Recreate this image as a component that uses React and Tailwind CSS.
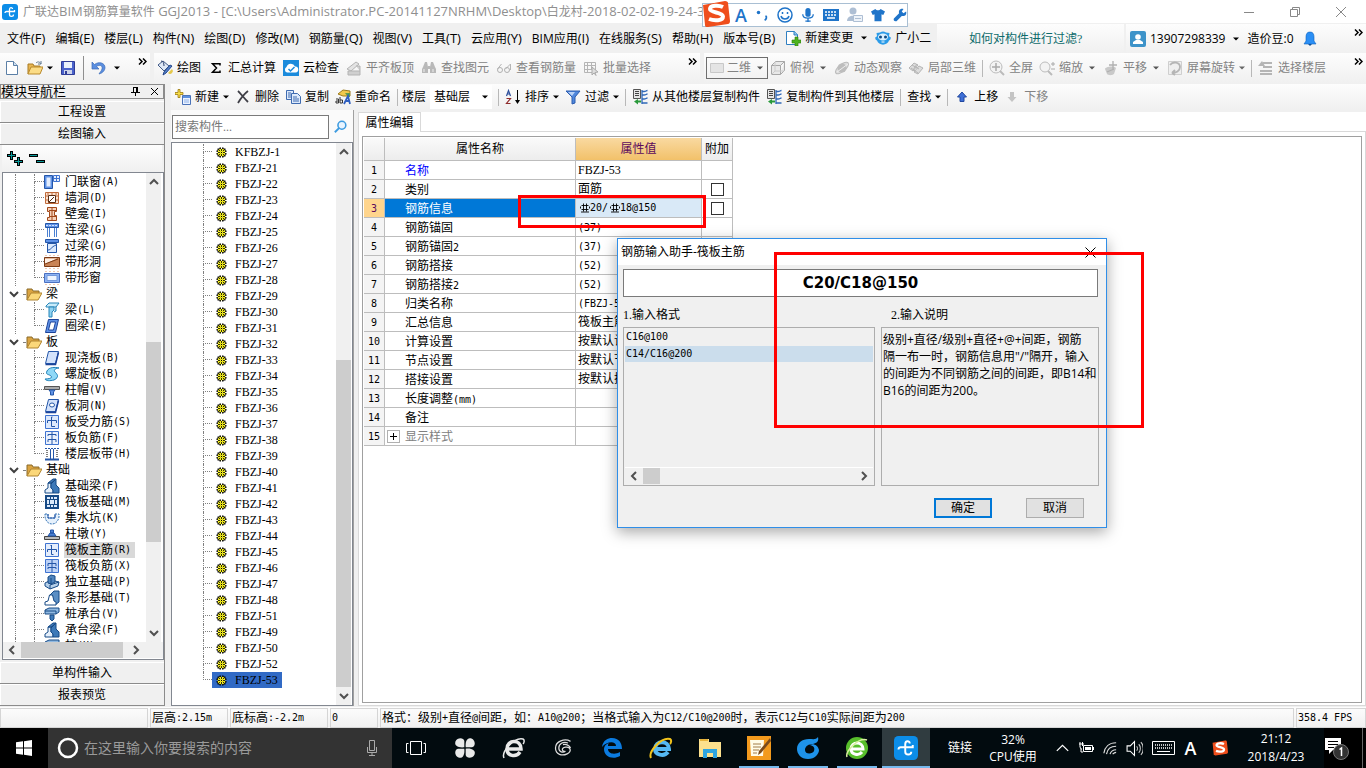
import React, { useState } from "react";
import clsx from "clsx";

const SONG = "font-['Liberation_Serif','Noto_Sans_CJK_SC',serif]";
const MONO = "font-['DejaVu_Sans_Mono','Noto_Sans_CJK_SC',monospace]";
const UI = "font-['Open_Sans','Noto_Sans_CJK_SC',sans-serif]";

// Chinese runs are 12px, latin runs sit in a 6px wide monospace
const Song = ({ children }) => (
  <>
    {children.split(/([\x20-\x7e]+)/).filter(Boolean).map((part, i) => (
      <span key={i} className={/^[\x20-\x7e]/.test(part) ? `${MONO} text-[10px]` : "text-xs"}>
        {part}
      </span>
    ))}
  </>
);

const Svg = ({ size = 16, box = 16, children, className }) => (
  <svg width={size} height={size} viewBox={`0 0 ${box} ${box}`} fill="none" className={clsx("shrink-0", className)} aria-hidden="true">
    {children}
  </svg>
);

const Caret = ({ className = "fill-black" }) => (
  <svg width="6" height="4" viewBox="0 0 6 4" className={clsx("shrink-0", className)} aria-hidden="true">
    <path d="M0 0.5h6L3 3.5z" />
  </svg>
);

const Chevron = ({ turn = "", className = "stroke-[#505050]" }) => (
  <svg width="10" height="10" viewBox="0 0 10 10" fill="none" strokeWidth="2" className={clsx("shrink-0", turn, className)} aria-hidden="true">
    <path d="M1 3l4 4 4-4" />
  </svg>
);

const Sep = () => <span className="h-[17px] w-px shrink-0 bg-[#b8b8b8]" />;

const More = () => (
  <button aria-label="更多" className="mt-1 h-2 w-3 self-start">
    <svg width="9" height="7" viewBox="0 0 9 7" fill="none" stroke="#000" strokeWidth="1.5">
      <path d="M1 .5l3 3-3 3M5 .5l3 3-3 3" />
    </svg>
  </button>
);

/* ---------- toolbar icons ---------- */
const icons = {
  file: <Svg><path d="M2.500 1.500h7l4 4v9h-11z" fill="#fff" stroke="#5b7fa6" /><path d="M9.500 1.500v4h4" fill="#cfe0f2" stroke="#5b7fa6" /></Svg>,
  open: <Svg><path d="M1 14V4h5l1 2h6v3" fill="#e8b652" stroke="#a87a23" /><path d="M1 14l3-7h12l-3 7z" fill="#fbdc86" stroke="#b98a2d" /><path d="M9 3c2-2 4-1 5 1m0-3v3h-3" stroke="#5f7890" /></Svg>,
  save: <Svg><path d="M1.500 1.500h13v13h-13z" fill="#4a62cc" stroke="#2f3c96" /><path d="M4 2h8v6H4z" fill="#e9f0fb" /><path d="M4 10h8v4H4z" fill="#cdd4ea" /><path d="M5 11h2v3H5z" fill="#2f3c96" /></Svg>,
  undo: <Svg><path d="M1 2v7h7L5.500 6.500C9 4 12 6 11 9c-.5 2-2 3-3 5 4-1 6-4 6-6.500C14 3 8 1 3.500 4.500z" fill="#5b8fe0" stroke="#3c6bb8" strokeWidth=".7" /></Svg>,
  paint: <Svg><path d="M1 5l5-4 6 5-5 5z" fill="#dfe8f5" stroke="#415a86" /><path d="M4 1c2 0 3 2 3 5" stroke="#2a3f6d" /><path d="M15 6l-6 7-3 2 1-3 6-7z" fill="#5280c9" stroke="#27488b" /><path d="M11 13c2 2 4 1 5-2l-1-2-4 4z" fill="#e5c84b" /></Svg>,
  sigma: <Svg><path d="M12 5.500V3.700H4.500L8.500 8l-4 4.300H12v-1.800" stroke="#000" strokeWidth="1.500" /></Svg>,
  cloud: <Svg><path d="M0 0h16v16H0z" fill="#1b8bdc" /><path d="M4 12.500a3 3 0 01-.5-5.500A4.500 4.500 0 0112 6.500a3 3 0 01.500 6z" fill="#fff" /><path d="M5.500 9l2 2 4-4" stroke="#1b8bdc" strokeWidth="1.500" /></Svg>,
  slab: <Svg><path d="M1 9l9-7 3 2-8 7z" fill="#e3e3e3" stroke="#b3b3b3" /><path d="M2 11h12v4H2zM10 6h4v5" fill="#cfcfcf" stroke="#b3b3b3" /></Svg>,
  binocular: <Svg><path d="M2 7l2-5h2l1 5v6H1V9zM14 7l-2-5h-2L9 7v6h6V9zM7 6h2v3H7z" fill="#b9b9b9" /><path d="M3 9v3m9-3v3" stroke="#eee" /></Svg>,
  glasses: <Svg><path d="M1.500 9l4-5m4 5l5-5v6" stroke="#b5b5b5" /><circle cx="4" cy="10" r="2.500" stroke="#b0b0b0" /><circle cx="11" cy="10" r="2.500" stroke="#b0b0b0" /></Svg>,
  batch: <Svg><path d="M1.500 2.500h11v10h-11zM1 5.500h12M1 9.500h8M4.500 2v11M8.500 2v8" stroke="#b5b5b5" /><path d="M9 7l6 5-3 .5 1 3-2-2.500-2 2z" fill="#ddd" stroke="#aaa" /></Svg>,
  flat: <Svg><path d="M1.500 3.500h13v9h-13z" fill="#e4e4e4" stroke="#c8c8c8" /></Svg>,
  cube: <Svg><path d="M1.500 5.500h9v9h-9zM1.500 5.500l4-4h9l-4 4M14.500 1.500v9l-4 4" fill="#e9e9e9" stroke="#a8a8a8" /><path d="M5 2v9l-4 4m4-4h9" stroke="#ccc" /></Svg>,
  orbit: <Svg><ellipse cx="8" cy="8" rx="8" ry="3.500" transform="rotate(-40 8 8)" fill="#ddd" stroke="#bbb" /><circle cx="8" cy="8" r="4.500" fill="#bdbdbd" /><path d="M3 12L14 4" stroke="#eee" /></Svg>,
  local: <Svg><path d="M1 8l5-5 4 2-5 6zM6 12l5-6 4 2-5 6z" fill="#ddd" stroke="#b5b5b5" /><path d="M4 5l7 4M3 8l7 5M9 4L5 10" stroke="#b5b5b5" /></Svg>,
  full: <Svg><circle cx="7" cy="7" r="6" fill="#f3f3f3" stroke="#bdbdbd" /><path d="M7 3v8M3 7h8" stroke="#aaa" strokeWidth="1.500" /><path d="M11 11l4 4" stroke="#bbb" strokeWidth="2" /></Svg>,
  zoom: <Svg><circle cx="6" cy="7" r="5" fill="#f3f3f3" stroke="#bdbdbd" /><path d="M9 11l4 4" stroke="#bbb" strokeWidth="2" /><path d="M12 4h4m-2-2v4m-2 3h4" stroke="#aaa" /></Svg>,
  pan: <Svg><path d="M2 9c0-2 8-4 11-1l-2 6c-3 2-6 1-7 0z" fill="#c9c9c9" /><path d="M10 1v8M6 5h8M4 12l7-3" stroke="#b0b0b0" strokeWidth="1.300" /></Svg>,
  rotate: <Svg><path d="M1.500 1.500h13v13h-13z" fill="#efefef" stroke="#cfcfcf" /><path d="M3 5c3-4 10-3 10 2 0 4-4 6-8 6m0 0l3-3m-3 3l3 2" stroke="#b5b5b5" strokeWidth="1.800" /></Svg>,
  floors: <Svg><path d="M5 3h9M5 7h9M2 11h12M2 14h12" stroke="#b5b5b5" strokeWidth="2" /><path d="M0 6l4-5 3 5z" fill="#b5b5b5" /></Svg>,
  add: <Svg><path d="M7.500 6.500h8v9h-8z" fill="#eaf2ff" stroke="#4a72b8" /><path d="M8 7h7v2H8z" fill="#5b8fe0" /><path d="M9 11h5m-5 2h5" stroke="#8fb1e8" /><path d="M3 .5h2v3h3v2H5v3H3v-3H0v-2h3z" fill="#f9e04a" stroke="#9c7a10" strokeWidth=".8" /></Svg>,
  del: <Svg><path d="M3 2c3 3 6 7 10 11M13 2C9 5 6 9 3 14" stroke="#3f3f46" strokeWidth="1.800" /></Svg>,
  copy: <Svg><path d="M1.500 1.500h7v9h-7z" fill="#dce9fb" stroke="#3f6bb0" /><path d="M3 4h3M3 6h3M3 8h3" stroke="#3f6bb0" /><path d="M6.500 4.500h6l3 3v7h-9z" fill="#dce9fb" stroke="#3f6bb0" /><path d="M8 8h4m-4 2h6m-6 2h6" stroke="#3f6bb0" /></Svg>,
  rename: <Svg><path d="M3 5l5-4 7 1v5H8z" fill="#f1c94d" stroke="#9d7a1d" /><path d="M10 4h5v4h-2z" fill="#5d9b4c" /><path d="M1 10h2.500v4H1v-2h2m2-4v6h2.500v-3H5" stroke="#333" /><path d="M9 15l4-8 2 8m-4-3h4" stroke="#2f5fc0" strokeWidth="1.800" /></Svg>,
  sort: <Svg><path d="M1.500 7l2-5.500 2 5.500M2.500 5h2" stroke="#2d4f9c" strokeWidth="1.200" /><path d="M1.500 9.500h4l-4 5h4" stroke="#8e2b2b" strokeWidth="1.200" /><path d="M12.500 1v12" stroke="#000" /><path d="M10 11h5l-2.500 4z" fill="#000" /></Svg>,
  filter: <Svg><path d="M1 2h14L10 8v6l-3 1V8z" fill="#4f87dc" stroke="#2d5cae" /><path d="M3 3h7L7 7z" fill="#b8d2f7" /></Svg>,
  from: <Svg><path d="M1.500.5h7v9h-7z" fill="#e6e6e6" stroke="#555" /><path d="M3 2.500h4M3 4.500h4M3 6.500h4" stroke="#444" /><path d="M10 1v14M10 2.500h2c2 0 2-1 3.500-1M10 6h2c2 0 2-1 3.500-1M10 10h2c2 0 2-1 3.500-1M10 14h5.500" stroke="#2f68b8" strokeWidth="1.300" /><path d="M6 10v5.500L2 12.500z" fill="#2a9a3b" /><path d="M6 12.500h3" stroke="#2a9a3b" strokeWidth="2" /></Svg>,
  up: <Svg><path d="M8 3l4.500 5H10v4.500H6V8H3.500z" fill="#3e6fd6" stroke="#2148a0" /></Svg>,
  down: <Svg><path d="M8 13L3.500 8H6V3h4v5h2.500z" fill="#c4c4c4" /></Svg>,
  change: <Svg><path d="M1.500 1.500h8l3 3v10h-11z" fill="#fff" stroke="#2f7fc1" /><path d="M9 1v4h4" fill="#8cc4ee" stroke="#2f7fc1" /><path d="M10 7h3v3h3v3h-3v3h-3v-3H7v-3h3z" fill="#4cb31e" stroke="#2d7b0c" strokeWidth=".6" /></Svg>,
  robot: <Svg><path d="M0 7c1 1 1 0 2-1l-.5-3L5 2.500C7 1 9 1 11 2.500l3.500.5L14 6c1 1 1 2 2 1-.5 3-1 3-2 3.500C12.500 16 3.500 16 2 10.500 1 10 .5 10 0 7z" fill="#2b9be8" /><ellipse cx="8" cy="7" rx="5" ry="3.500" fill="#d9f0ff" /><circle cx="5.500" cy="7" r="1.500" fill="#124a80" /><circle cx="10.500" cy="7" r="1.500" fill="#124a80" /><path d="M6.500 12h3" stroke="#fff" /></Svg>,
  user: <Svg><rect width="16" height="16" rx="2" fill="#3d93c9" /><circle cx="8" cy="6" r="2.800" fill="#fff" /><path d="M3 13v-2l3-2h4l3 2v2z" fill="#fff" /></Svg>,
  bell: <Svg><path d="M8 1c3 0 4 2 4 5v4l2 3H2l2-3V6c0-3 1-5 4-5z" fill="#2b8ff5" stroke="#0f63bd" strokeWidth=".6" /><path d="M6 13h4l-2 2z" fill="#0f4f96" /></Svg>,
};

const Tool = ({ icon, label, caret, off }) => (
  <button className={clsx("flex shrink-0 items-center gap-1 whitespace-nowrap", off ? "text-[#838383]" : "text-black")}>
    {icons[icon]}
    {label && <span>{label}</span>}
    {caret && <Caret className={off ? "fill-[#666]" : "fill-black"} />}
  </button>
);

const AppLogo = ({ size = 16 }) => (
  <Svg size={size}>
    <rect width="16" height="16" rx="3" fill="#0c8de8" />
    <path d="M10.500 5c0-2-3-2-3 .5v5c0 2.500 4 2.500 4 0M3 9c0-1 .5-1.500 1.500-1.500h8V6" stroke="#fff" strokeWidth="1.300" />
  </Svg>
);

const SogouLogo = ({ size, className }) => (
  <Svg size={size} box={28} className={className}>
    <path d="M1 5l22-4c2 0 3 1 3 2l2 18c0 2-1 3-2 3L6 27c-2 0-3 0-3-2z" fill="#ef4e1c" />
    <path d="M21 7c-4-2-13-2-13 2s13 3 13 7.500S12 21 7 19" stroke="#fff" strokeWidth="4" />
  </Svg>
);

/* ---------- title bar ---------- */
const TitleBar = () => (
  <header className={`${UI} flex h-[23px] shrink-0 items-center bg-white pl-0.5 text-[#8f8f8f]`}>
    <AppLogo />
    <h1 className="ml-[5px] flex-1 truncate text-xs leading-5">
      广联达<span className="text-[13px]">BIM</span>钢筋算量软件
      <span className="text-[13px]">{" GGJ2013 - [C:\\Users\\Administrator.PC-20141127NRHM\\Desktop\\"}</span>
      白龙村<span className="text-[13px]">-2018-02-02-19-24-35</span>
    </h1>
    <div className="flex items-center gap-9 pr-5">
      <button aria-label="最小化"><Svg size={10} box={10}><path d="M0 5.500h10" stroke="#888" /></Svg></button>
      <button aria-label="还原"><Svg size={10} box={10}><path d="M.5 2.500h7v7h-7zM2.500 2V.5h7v7H8" stroke="#888" /></Svg></button>
      <button aria-label="关闭"><Svg size={10} box={10}><path d="M0 0l10 10M10 0L0 10" stroke="#888" /></Svg></button>
    </div>
  </header>
);

// floating input method bar
const ImeBar = () => (
  <div className="absolute left-[702px] top-0 flex items-center">
    <div className="mt-[3px] flex h-6 w-[206px] items-center gap-2 border border-[#a9bfd3] bg-white pl-8 text-[#1f74c9]">
      <span className="font-['Open_Sans'] text-lg font-semibold leading-6">A</span>
      <Svg size={14}><circle cx="4" cy="5" r="2" fill="#1f74c9" /><path d="M12 9c2 1 1 4-1 5" stroke="#1f74c9" strokeWidth="2" /></Svg>
      <Svg><circle cx="8" cy="8" r="7" stroke="#1f74c9" strokeWidth="1.500" /><path d="M5.500 5v2M10.500 5v2M4 9c1 4 7 4 8 0" stroke="#1f74c9" strokeWidth="1.500" /></Svg>
      <Svg size={14}><rect x="5" y="0" width="6" height="10" rx="3" fill="#1f74c9" /><path d="M2 7c0 6 12 6 12 0M8 12v4M5 15h6" stroke="#1f74c9" strokeWidth="1.500" /></Svg>
      <Svg><path d="M0 2h16v12H0z" fill="#1f74c9" /><path d="M2 5h12M2 8h12" stroke="#fff" strokeWidth="1.500" strokeDasharray="2 1" /><path d="M4 11h8" stroke="#fff" strokeWidth="1.500" /></Svg>
      <Svg><circle cx="6" cy="4" r="3.500" fill="#aebfd4" /><path d="M0 14c0-7 12-7 12 0z" fill="#aebfd4" /><path d="M6.500 8.500h9v6h-9zM8 11.500h6" fill="#eef3f9" stroke="#aebfd4" /></Svg>
      <Svg size={14}><path d="M5 1c1 2 5 2 6 0l5 3-2 4-2-1v8H4V7L2 8 0 4z" fill="#1f74c9" /></Svg>
      <Svg size={14}><path d="M15 4l-3 2-2-2 2-3C8 0 6 3 7 6l-6 6c-1 2 1 4 3 3l6-6c3 1 6-1 5-5z" fill="#1f74c9" /></Svg>
    </div>
    <SogouLogo size={28} className="absolute left-0 top-0" />
  </div>
);

const menus = [["文件", "(F)"], ["编辑", "(E)"], ["楼层", "(L)"], ["构件", "(N)"], ["绘图", "(D)"], ["修改", "(M)"], ["钢筋量", "(Q)"], ["视图", "(V)"], ["工具", "(T)"], ["云应用", "(Y)"], ["BIM应用", "(I)"], ["在线服务", "(S)"], ["帮助", "(H)"], ["版本号", "(B)"]];

const BAR = "bg-linear-to-b from-[#fdfdfd] to-[#f0f0f0]";

const MenuBar = () => (
  <nav className={`${UI} flex h-[30px] shrink-0 items-stretch gap-0.5 text-xs leading-4 text-black`}>
    <div className="flex w-[935px] shrink-0 items-center gap-2.5 whitespace-nowrap pl-[7px]">
      {menus.map(([name, key]) => (
        <button key={key} className="shrink-0">{name}<span className="text-[13px]">{key}</span></button>
      ))}
      <div className="flex items-center gap-1">
        <Tool icon="change" label="新建变更" />
        <Caret className="mx-1 fill-black" />
        <Tool icon="robot" label="广小二" />
      </div>
    </div>
    <div className={`${BAR} mt-px w-[187px] shrink-0 pl-8 pt-[7px]`}>
      <a href="#help" className={`${SONG} text-[#0d6b6b]`}>如何对构件进行过滤?</a>
    </div>
    <div className={`${BAR} mt-px flex flex-1 items-center pl-1`}>
      <Tool icon="user" label="13907298339" />
      <Caret className="mx-2 fill-black" />
      <span className="mr-2">造价豆:0</span>
      <button aria-label="通知">{icons.bell}</button>
      <span className="flex-1" />
      <More />
    </div>
  </nav>
);

const MainToolbar = () => (
  <div className={`${UI} flex h-[30px] shrink-0 gap-1 text-xs leading-4`}>
    <div className={`${BAR} flex w-[150px] shrink-0 items-center gap-[7px] pl-1`}>
      <Tool icon="file" />
      <Tool icon="open" caret />
      <Tool icon="save" />
      <span className="h-6 w-px bg-[#8f8f8f]" />
      <Tool icon="undo" />
      <Caret />
      <span className="flex-1" />
      <More />
    </div>
    <div className={`${BAR} flex w-[546px] shrink-0 items-center gap-[7px] pl-[3px]`}>
      <Tool icon="paint" label="绘图" />
      <Tool icon="sigma" label="汇总计算" />
      <Tool icon="cloud" label="云检查" />
      <Tool icon="slab" label="平齐板顶" off />
      <Tool icon="binocular" label="查找图元" off />
      <Tool icon="glasses" label="查看钢筋量" off />
      <Tool icon="batch" label="批量选择" off />
      <span className="flex-1" />
      <More />
    </div>
    <div className={`${BAR} flex flex-1 items-center gap-1.5 pl-0.5`}>
      <button className="flex h-[22px] w-[62px] shrink-0 items-center gap-0.5 whitespace-nowrap border border-[#6e6e6e] pl-0.5 text-[#838383]">
        {icons.flat}<span className="mr-1">二维</span><Caret className="fill-[#555]" />
      </button>
      <div className="-ml-1 flex items-center gap-1.5">
        <Tool icon="cube" label="俯视" off />
        <Caret className="mr-0.5 fill-[#555]" />
        <Tool icon="orbit" label="动态观察" off />
        <Tool icon="local" label="局部三维" off />
        <Sep />
        <Tool icon="full" label="全屏" off />
        <Tool icon="zoom" label="缩放" off />
        <Caret className="mr-0.5 fill-[#555]" />
        <Tool icon="pan" label="平移" off />
        <Caret className="mr-0.5 fill-[#555]" />
        <Tool icon="rotate" label="屏幕旋转" caret off />
        <Sep />
        <Tool icon="floors" label="选择楼层" off />
      </div>
      <span className="flex-1" />
      <More />
    </div>
  </div>
);

const EditToolbar = () => (
  <div className={`${UI} ${BAR} flex h-[26px] shrink-0 items-center gap-1.5 pl-1 text-xs leading-4`}>
    <Tool icon="add" label="新建" caret />
    <Tool icon="del" label="删除" />
    <Tool icon="copy" label="复制" />
    <Tool icon="rename" label="重命名" />
    <div className="flex items-center gap-1">
      <Sep />
      <label htmlFor="floor">楼层</label>
      <div className="relative flex w-[62px] items-center">
        <select id="floor" className="h-6 w-full appearance-none bg-white pl-1">
          <option>基础层</option>
        </select>
        <Caret className="pointer-events-none absolute right-1 fill-black" />
      </div>
    </div>
    <Sep />
    <Tool icon="sort" label="排序" caret />
    <Tool icon="filter" label="过滤" caret />
    <Sep />
    <Tool icon="from" label="从其他楼层复制构件" />
    <Tool icon="from" label="复制构件到其他楼层" />
    <Sep />
    <Tool icon="" label="查找" caret />
    <Sep />
    <Tool icon="up" label="上移" />
    <Tool icon="down" label="下移" off />
  </div>
);

/* ---------- module tree ---------- */
const B = "#2456a8";
const glyphs = {
  doorwin: <><path d="M.5 1.500h8v13h-8z" fill="#5f92e6" stroke={B} /><path d="M2.500 3.500h4v9h-4z" fill="#e3edfd" /><path d="M9.500 1.500h6v6h-6zM12.500 1v7M9 4.500h7" fill="#e6effc" stroke="#3f73d0" /></>,
  hole: <><path d="M1.500 2.500h13v11h-13zM1 6h3m8 0h3M1 10h3m8 0h3M4 2v3m4-3v3m4-3v3" fill="#fbe3d2" stroke="#c06a3a" /><path d="M4.500 5.500h7v7h-7z" fill="#fff" stroke="#5a2d12" /><path d="M5 12l5-5" stroke="#5a2d12" /></>,
  niche: <><path d="M3.500 1.500h9v4h-2v4h2v5h-9v-3h2v-6h-2z" fill="#f7d3bb" stroke="#a1481a" /><path d="M8 2v12M5 4.500h7M5 10.500h7" stroke="#a1481a" /></>,
  link: <><path d="M1.500 1.500h13v4h-13z" fill="#5f92e6" stroke={B} /><path d="M3.500 6v9M5.500 6v9M10.500 6v9M12.500 6v9" stroke="#4a80d2" /><path d="M2 3.500h12" stroke="#cfe0fb" strokeDasharray="2 1" /></>,
  lintel: <><path d="M1.500 1.500h13v3h-13z" fill="#5f92e6" stroke={B} /><path d="M3.500 5.500h9v9h-9z" fill="#dceafd" stroke={B} /><path d="M4 12c3 0 3-3 8-5" stroke={B} /></>,
  striphole: <><path d="M.5 3.500h15v9H.5z" fill="#c98355" stroke="#7c3a14" /><path d="M1 10l12-5.500H1z" fill="#fff1e6" /><path d="M1 10l13-5" stroke="#7c3a14" /><path d="M1 1.500h14M1 14.500h14" stroke="#f0c7b0" strokeDasharray="2 2" /></>,
  stripwin: <><path d="M.5 3.500h15v9H.5z" fill="#8db2f2" stroke="#4a6fc0" /><path d="M3 5.500h10v5H3z" fill="#eef4ff" stroke="#7398dc" /><path d="M1 1.500h14M1 14.500h14" stroke="#f0c7b0" strokeDasharray="2 2" /></>,
  beam: <><path d="M2 4l3-3h10l-3 4H2z" fill="#c9ecfb" stroke="#2785b8" /><path d="M5 5l5 0v3l-2 2v5H5zM12 5v4l-2 1" fill="#8fd3f2" stroke="#2785b8" /></>,
  ring: <><path d="M4.500 1.500h10l-3 13h-10z" fill="#5f92e6" stroke="#1c439a" /><path d="M6.500 4h5l-2 8h-5z" fill="#fff" stroke="#1c439a" /></>,
  slab: <><path d="M4.500 1.500h10l-3 12h-10z" fill="#d3e2fb" stroke={B} /><path d="M1.500 14.500h10l3-12" stroke="#1c439a" strokeWidth="1.500" /></>,
  spiral: <><path d="M3 5c2-4 8-4 12-3-3 0-6 2-4 4s5 5-1 8c-4 1-8 1-9-1 4 0 8-1 6-3S1 9 3 5z" fill="#8fd8f7" stroke="#1e7fb8" /></>,
  cap: <><path d="M.5 4.500h15v3H.5z" fill="#aaa" stroke="#555" /><path d="M5 8h6l-1.500 2v3h-3v-3z" fill="#5f92e6" stroke={B} /></>,
  slabhole: <><path d="M4.500 1.500h10l-3 12h-10z" fill="#d3e2fb" stroke={B} /><path d="M1.500 14.500h10l3-12" stroke="#1c439a" strokeWidth="1.500" /><ellipse cx="8" cy="7" rx="2.500" ry="2" fill="#fff" stroke={B} /></>,
  bars: <><path d="M1.500 1.500h13v13h-13z" fill="#dde9fc" stroke="#3f73d0" /><path d="M3.500 9V6.500h9V9M8.500 3H7.500v9.500H11" stroke={B} /></>,
  neg: <><path d="M1.500 1.500h13v13h-13z" fill="#eaf1fd" stroke="#3f73d0" /><path d="M8 2v12M4 6V4.500h8V6M4 12V9.500h8V12" stroke={B} /></>,
  strip: <><path d="M1 2.500h14" stroke={B} strokeDasharray="2 1" /><path d="M1 13.500h14" stroke={B} strokeWidth="2" /><path d="M3 4v8M13 4v8" stroke="#000" strokeDasharray="1 1" /><path d="M6.500 3v10M9.500 3v10" stroke={B} /></>,
  fbeam: <><path d="M1 15v-3l3-2V5h3v5l2 2v3z" fill="#e6f0fb" stroke="#174a86" /><path d="M4 5l5-4h3L7 5zM7 6l5-5v6l3 3v5H9v-3l-2-2z" fill="#3d79b8" stroke="#174a86" /></>,
  raft: <><path d="M1 1h14v14H1z" fill="#174a86" /><path d="M3 3h3v2H3zm4 0h2v2H7zm3 0h3v2h-3zM3 6h2v4H3zm3 0h4v4H6zm5 0h2v4h-2zM3 11h3v2H3zm4 0h2v2H7zm3 0h3v2h-3z" fill="#dceafb" /></>,
  pit: <><path d="M1 4h3v4h7V4h4v3c-1 5-4 7-7 7s-6-2-7-7z" fill="#e6f1fc" stroke="#3b78b8" strokeDasharray="2 1" /><path d="M4 4v4h7V4" stroke={B} /></>,
  pier: <><path d="M.5 10.500h15v3H.5z" fill="#bbb" stroke="#444" /><path d="M4 10l2-3h4l2 3zM6.500 4h3v3h-3z" fill="#4a80d2" stroke={B} /></>,
  main: <><path d="M1.500 1.500h13v13h-13z" fill="#e4edfc" stroke="#3f73d0" /><path d="M3.500 10V7.500h9V10M7.500 3.500h-1M7.500 3v9.500h2" stroke={B} /></>,
  rneg: <><path d="M1.500 1.500h13v13h-13z" fill="#bdd2f7" stroke="#3f73d0" /><path d="M8 2v12M4 8V5.500h8V8M4 11v-1.500h8V11" stroke={B} /></>,
  iso: <><path d="M1 9l6-3 8 2-1 4-8 3-5-3z" fill="#b5cfe9" stroke="#174a86" /><path d="M4 3l3-2 4 1v6l-4 2-3-1z" fill="#4f83bd" stroke="#174a86" /><path d="M7 4v6m-1 5v-4l9-3" stroke="#174a86" /></>,
  stripf: <><path d="M6 5l4-4h5v11l-4 3z" fill="#5a8ec4" stroke="#174a86" /><path d="M1 15v-3l3-1 1.500-6h3L10 11l2 1v3z" fill="#fff" stroke="#174a86" /></>,
  pile: <><path d="M1 4l4-2h10v4l-3 2H1z" fill="#8fb8e0" stroke="#174a86" /><path d="M6 9h4v4l-2 2-2-2z" fill="#3d79b8" stroke="#174a86" /><path d="M1 5h11v3" stroke="#174a86" /></>,
};

const tree = [
  { items: [["doorwin", "门联窗(A)"], ["hole", "墙洞(D)"], ["niche", "壁龛(I)"], ["link", "连梁(G)"], ["lintel", "过梁(G)"], ["striphole", "带形洞"], ["stripwin", "带形窗"]] },
  { name: "梁", items: [["beam", "梁(L)"], ["ring", "圈梁(E)"]] },
  { name: "板", items: [["slab", "现浇板(B)"], ["spiral", "螺旋板(B)"], ["cap", "柱帽(V)"], ["slabhole", "板洞(N)"], ["bars", "板受力筋(S)"], ["neg", "板负筋(F)"], ["strip", "楼层板带(H)"]] },
  { name: "基础", items: [["fbeam", "基础梁(F)"], ["raft", "筏板基础(M)"], ["pit", "集水坑(K)"], ["pier", "柱墩(Y)"], ["main", "筏板主筋(R)"], ["rneg", "筏板负筋(X)"], ["iso", "独立基础(P)"], ["stripf", "条形基础(T)"], ["pile", "桩承台(V)"], ["fbeam", "承台梁(F)"], ["pile", "桩(U)"]] },
];

const DOT = "border-dotted border-[#808080]";

const Branch = ({ last, className }) => (
  <span className={clsx("flex h-4 shrink-0 flex-col", className)}>
    <span className={`h-2 border-b border-l ${DOT}`} />
    <span className={clsx("h-2", !last && `border-l ${DOT}`)} />
  </span>
);

const ModuleTree = () => {
  const [selected, setSelected] = useState("筏板主筋(R)");
  return (
    <ul className="min-w-0 flex-1 overflow-hidden pt-px leading-4">
      {tree.map((group, g) => (
        <React.Fragment key={g}>
          {group.name && (
            <li className="flex h-4 items-center pl-1.5 text-xs">
              <Chevron className="stroke-[#404040]" />
              <span className={`ml-1 mr-px w-0.5 border-b ${DOT}`} />
              <Svg><path d="M1 14V3h5l1 2h6v3" fill="#dba441" stroke="#8a6a2a" /><path d="M1 14l4-7h11l-4 7z" fill="#fbd779" stroke="#b08430" /></Svg>
              <span className="ml-1">{group.name}</span>
            </li>
          )}
          {group.items.map(([kind, label], i) => (
            <li key={label + i} className="flex h-4 items-center whitespace-nowrap pl-3">
              <span className={`h-4 w-[19px] shrink-0 border-l ${DOT}`} />
              <Branch last={i === group.items.length - 1} className="w-2.5" />
              <Svg>{glyphs[kind]}</Svg>
              <button
                onClick={() => setSelected(label)}
                className={clsx("ml-1 flex h-4 items-center pl-px pr-1", selected === label && "bg-[#d9d9d9]")}
              >
                <Song>{label}</Song>
              </button>
            </li>
          ))}
        </React.Fragment>
      ))}
    </ul>
  );
};

const navButton = "h-[22px] shrink-0 border-b border-[#8b8b8b] bg-[#f0f0f0] text-xs leading-5 shadow-[inset_1px_1px_0_#fff]";

const ModulePanel = () => (
  <aside className="flex w-[165px] shrink-0 flex-col border-r border-[#8b8b8b]">
    <div className="flex h-[15px] items-center border border-[#8b8b8b] text-xs leading-3">
      <h2 className="flex-1 text-[13px]">模块导航栏</h2>
      <button aria-label="固定" className="mr-2.5"><Svg size={9} box={9}><path d="M2.500 0v5M5.500 0v5M6.500 0v5M0 5.500h9M4.500 6v3M2 .5h5" stroke="#000" /></Svg></button>
      <button aria-label="关闭" className="mr-1"><Svg size={9} box={9}><path d="M1 1l7 7M8 1L1 8" stroke="#000" /></Svg></button>
    </div>
    <button className={`${navButton} mt-0.5`}>工程设置</button>
    <button className={navButton}>绘图输入</button>
    <div className={`${BAR} mx-0.5 flex h-[27px] items-center gap-1 pl-1`}>
      <button aria-label="全部展开"><Svg size={18} box={18}><path d="M5.500 1v9M1 5.500h9M12.500 7v9M8 11.500h9" stroke="#000" strokeWidth="3" /><path d="M5.500 2v7M2 5.500h7M12.500 8v7M9 11.500h7" stroke="#0a9a9a" /></Svg></button>
      <button aria-label="全部折叠"><Svg size={18} box={18}><path d="M1 5.500h9M8 11.500h9" stroke="#000" strokeWidth="3" /><path d="M2 5.500h7M9 11.500h7" stroke="#0a9a9a" /></Svg></button>
    </div>
    <div className="ml-0.5 flex min-h-0 flex-1 flex-col border border-[#828790] bg-white">
      <div className="flex min-h-0 flex-1 overflow-hidden">
        <ModuleTree />
        <div className="mr-0.5 flex w-[15px] shrink-0 flex-col items-center bg-[#f0f0f0] py-1">
          <Chevron turn="rotate-180" />
          <span className="flex-[155]" />
          <span className="w-full flex-[199] bg-[#cdcdcd]" />
          <span className="flex-[86]" />
          <Chevron />
        </div>
      </div>
      <div className="mb-px flex h-4 shrink-0 items-center bg-[#f0f0f0] px-1">
        <Chevron turn="rotate-90" />
        <span className="ml-1 h-full w-[102px] bg-[#cdcdcd]" />
        <Chevron turn="-rotate-90" className="ml-2 stroke-[#505050]" />
      </div>
    </div>
    <button className={`${navButton} mt-0.5`}>单构件输入</button>
    <button className={navButton}>报表预览</button>
  </aside>
);

/* ---------- component list ---------- */
const components = [
  "KFBZJ-1",
  ...Array.from({ length: 28 }, (_, i) => `FBZJ-${21 + i}`),
  "FBZJ-51", "FBZJ-49", "FBZJ-50", "FBZJ-52", "FBZJ-53",
];

const Gear = () => (
  <Svg size={11} box={11}>
    <path d="M3.500.5h1.500v10H3.500zM6 .5h1.500v10H6zM.5 3.500V5h10V3.500zM.5 6v1.500h10V6zM1.500 1.500h2v2h-2zM7.500 1.500h2v2h-2zM1.500 7.500h2v2h-2zM7.500 7.500h2v2h-2z" fill="#000" />
    <circle cx="5.500" cy="5.500" r="3.800" fill="#f5ee20" />
    <path d="M5.500 2v2m0 3v2M2 5.500h2m3 0h2M3 3l1.200 1.200m2.600 2.600L8 8M8 3L6.800 4.200M4.200 6.800L3 8" stroke="#000" strokeWidth=".8" />
    <path d="M5 5h1v1H5z" fill="#000" />
  </Svg>
);

const ComponentPanel = () => {
  const [current, setCurrent] = useState("FBZJ-53");
  return (
    <section className="flex w-[183px] shrink-0 flex-col border-r border-[#a0a0a0]">
      <div className="flex h-8 shrink-0 items-center bg-[#fafafa] pl-px pt-0.5">
        <input aria-label="搜索构件" placeholder="搜索构件..." className={`${SONG} h-6 w-[157px] border border-[#7a7a7a] bg-white px-0.5 text-xs placeholder:text-[#777]`} />
        <button aria-label="搜索" className="flex h-6 flex-1 items-center justify-center">
          <Svg size={14}><circle cx="9" cy="6" r="4.500" fill="#e8f4ff" stroke="#3d9be0" strokeWidth="1.800" /><path d="M6 9l-5 5" stroke="#3d9be0" strokeWidth="2.200" /></Svg>
        </button>
      </div>
      <div className="flex min-h-0 flex-1 border border-[#828790] bg-white">
        <ul className={`${SONG} min-w-0 flex-1 overflow-hidden pl-[31px] pt-px text-xs leading-4`}>
          {components.map((name, i) => (
            <li key={name} className="flex h-4 items-center">
              <Branch last={i === components.length - 1} className="w-[9px]" />
              <button
                onClick={() => setCurrent(name)}
                className={clsx("flex h-4 items-center gap-2 whitespace-nowrap pl-1 pr-1", current === name && "bg-[#316ac5]")}
              >
                <Gear />{name}
              </button>
            </li>
          ))}
        </ul>
        <div className="mr-px flex w-[15px] shrink-0 flex-col items-center bg-[#f0f0f0] py-1">
          <Chevron turn="rotate-180" />
          <span className="flex-[202]" />
          <span className="w-full flex-[325] bg-[#cdcdcd]" />
          <Chevron className="mt-1 stroke-[#505050]" />
        </div>
      </div>
    </section>
  );
};

/* ---------- property grid ---------- */
const Rebar = () => (
  <Svg size={10} box={10} className="inline-block">
    <path d="M3.500.5v8M6.500.5v8M1.500 2.500h7M.5 3.500v2M9.500 3.500v2M1.500 6.500h7M1 9h8" stroke="#000" strokeWidth=".9" />
  </Svg>
);

const properties = [
  { name: "名称", value: "FBZJ-53", serif: true },
  { name: "类别", value: "面筋", check: true },
  { name: "钢筋信息", check: true, active: true },
  { name: "钢筋锚固", value: "(37)" },
  { name: "钢筋锚固2", value: "(37)" },
  { name: "钢筋搭接", value: "(52)" },
  { name: "钢筋搭接2", value: "(52)" },
  { name: "归类名称", value: "(FBZJ-53)" },
  { name: "汇总信息", value: "筏板主筋" },
  { name: "计算设置", value: "按默认计算设置" },
  { name: "节点设置", value: "按默认节点设置" },
  { name: "搭接设置", value: "按默认搭接设置" },
  { name: "长度调整(mm)", value: "" },
  { name: "备注", value: "" },
  { name: "显示样式", value: "", group: true },
];

const cell = "h-[19px] border-b border-r border-[#bdbdbd] p-0 leading-4";

const PropertyGrid = () => (
  <table className={`${SONG} w-[369px] table-fixed border-separate border-spacing-0 text-xs`}>
    <colgroup>
      <col className="w-[21px]" />
      <col className="w-[191px]" />
      <col className="w-[126px]" />
      <col className="w-[31px]" />
    </colgroup>
    <thead>
      <tr className="bg-linear-to-b from-[#fafafa] to-[#ececec]">
        <th className="h-[23px] border-b border-r border-[#bdbdbd]" />
        <th className="border-b border-r border-[#bdbdbd] p-0 font-normal">属性名称</th>
        <th className="border-b border-r border-[#bdbdbd] bg-linear-to-b from-[#f9d9a0] to-[#f2c169] p-0 font-normal text-[#5c0a5c]">属性值</th>
        <th className="border-b border-r border-[#bdbdbd] p-0 font-normal">附加</th>
      </tr>
    </thead>
    <tbody>
      {properties.map((p, i) => (
        <tr key={p.name}>
          <th scope="row" className={clsx(cell, "text-center font-normal", p.active ? "bg-[#ffd58d] text-[#5c0a5c]" : "bg-[#f4f4f4]")}>
            <Song>{String(i + 1)}</Song>
          </th>
          <td className={clsx(cell, p.active && "bg-[#0078d7] text-white", i === 0 && "text-[#0000ff]", p.group && "text-[#808080]")}>
            <div className="flex h-[18px] items-center pl-0.5">
              <span className="w-[18px]">
                {p.group && (
                  <button aria-label="展开" className="flex h-[13px] w-[13px] items-center justify-center border border-[#b0b0b0] bg-white">
                    <Svg size={7} box={7}><path d="M3.500 0v7M0 3.500h7" stroke="#000" /></Svg>
                  </button>
                )}
              </span>
              <span className="pt-0.5"><Song>{p.name}</Song></span>
            </div>
          </td>
          <td className={clsx(cell, "overflow-hidden whitespace-nowrap", p.active && "bg-[#d9e9f7]")}>
            <div className={clsx("flex h-[18px] items-center", p.active ? "pl-1" : "pl-0.5")}>
              {p.active ? (
                <><Rebar /><Song>20/</Song><span className="w-0.5" /><Rebar /><Song>18@150</Song></>
              ) : p.serif ? p.value : (
                <span><Song>{p.value}</Song></span>
              )}
            </div>
          </td>
          <td className={cell}>
            {p.check && <input type="checkbox" aria-label={`附加${p.name}`} className="mx-auto block h-[13px] w-[13px] appearance-none border border-[#333] bg-white" />}
          </td>
        </tr>
      ))}
    </tbody>
  </table>
);

/* ---------- rebar input dialog ---------- */
const formats = ["C16@100", "C14/C16@200"];

const RebarDialog = () => {
  const [value, setValue] = useState("C20/C18@150");
  return (
    <div role="dialog" aria-label="钢筋输入助手-筏板主筋" className="absolute left-[617px] top-[238px] flex w-[490px] flex-col border border-[#2f8ee8] bg-[#f0f0f0] pb-[9px] text-xs shadow-[0_4px_14px_rgba(0,0,0,0.35)]">
      <div className={`${UI} flex h-[26px] items-center bg-white pl-[3px] pr-2.5 leading-4`}>
        <h2 className="flex-1">钢筋输入助手-筏板主筋</h2>
        <button aria-label="关闭"><Svg size={11} box={11}><path d="M.5.5l10 10M10.500.5l-10 10" stroke="#000" /></Svg></button>
      </div>
      <input
        aria-label="钢筋信息"
        value={value}
        onChange={(e) => setValue(e.target.value)}
        className="mx-[5px] mr-2 mt-1 h-7 border border-[#7a7a7a] bg-white text-center font-['DejaVu_Sans'] text-[15px] font-bold leading-6"
      />
      <div className="ml-[5px] mr-[7px] mt-2.5 grid grid-cols-[252px_1fr] gap-x-1.5 gap-y-1">
        <h3 className="leading-4">1.输入格式</h3>
        <h3 className="pl-2.5 leading-4">2.输入说明</h3>
        <div className="flex h-[159px] flex-col border border-[#adadad] p-px">
          <ul className="flex-1">
            {formats.map((f, i) => (
              <li key={f} className={clsx("flex h-4 items-center pl-px leading-4 first:mb-px", i === 1 && "bg-[#cbddec]")}><Song>{f}</Song></li>
            ))}
          </ul>
          <div className="flex h-[17px] items-center border-t border-white px-1">
            <Chevron turn="rotate-90" />
            <span className="ml-1 h-full w-[17px] bg-[#cdcdcd]" />
            <span className="flex-1" />
            <Chevron turn="-rotate-90" />
          </div>
        </div>
        <p className={`${UI} h-[159px] whitespace-nowrap border border-[#adadad] pl-px pt-[3px] leading-[17px]`}>
          级别+直径/级别+直径+@+间距，钢筋<br />
          隔一布一时，钢筋信息用"/"隔开，输入<br />
          的间距为不同钢筋之间的间距，即B14和<br />
          B16的间距为200。
        </p>
      </div>
      <div className="mr-[22px] mt-3 flex justify-end gap-[34px]">
        <button className="h-5 w-[58px] border-2 border-[#0078d7] bg-[#e1e1e1] leading-4">确定</button>
        <button className="h-5 w-[58px] border border-[#adadad] bg-[#e1e1e1] leading-4">取消</button>
      </div>
    </div>
  );
};

const StatusBar = () => {
  const box = "flex h-5 items-center whitespace-nowrap border border-[#d5d5d5] pl-px leading-4";
  return (
    <footer className={`${BAR} mt-px flex h-[21px] shrink-0 items-center gap-0.5`}>
      <div className={`${box} w-[148px]`} />
      <div className={`${box} w-[78px]`}><Song>层高:2.15m</Song></div>
      <div className={`${box} w-[98px]`}><Song>底标高:-2.2m</Song></div>
      <div className={`${box} w-12`}><Song>0</Song></div>
      <div className={`${box} flex-1`}><Song>格式：级别+直径@间距，如：A10@200；当格式输入为C12/C10@200时，表示C12与C10实际间距为200</Song></div>
      <div className={`${box} w-[70px]`}><Song>358.4 FPS</Song></div>
    </footer>
  );
};

/* ---------- windows taskbar ---------- */
const PETAL = "M11.300 11.300C5 12 1 9.500 2.500 5.500S10.500 1 11.300 5z";

const apps = [
  { name: "任务视图", icon: <Svg size={20} box={20}><path d="M4.500 3.500h11v13h-11zM2.500 5.500h-2v9h2M17.500 5.500h2v9h-2" stroke="#fff" /></Svg> },
  { name: "四叶", icon: <Svg size={24} box={24}><g fill="#e9e9e9"><path d={PETAL} /><path d={PETAL} transform="rotate(90 12 12)" /><path d={PETAL} transform="rotate(180 12 12)" /><path d={PETAL} transform="rotate(270 12 12)" /></g></Svg> },
  { name: "浏览器", icon: <Svg size={24} box={24}><path d="M5 13h14c0-10-14-10-14 0 0 7 9 9 13 3" stroke="#e9e9e9" strokeWidth="3.500" /><path d="M2 22C-1 16 12 1 21 3c2 1 1 4 0 5" stroke="#e9e9e9" strokeWidth="1.500" /></Svg> },
  { name: "旋风", icon: <Svg size={20} box={24}><path d="M21 4C14 0 3 4 3 12s8 10 14 7 4-9-2-8-4 6 0 5M18 6C12 4 7 7 7 12s5 6 8 4M12 8c4-1 8 1 9 4" stroke="#ddd" strokeWidth="1.500" /></Svg> },
  { name: "Edge", icon: <Svg size={24} box={24}><path d="M2 11C3 4 8 2 12 2c7 0 10 5 10 11H8c0 5 7 6 12 3v4c-7 4-16 1-16-7 0-3 2-5 5-6-1 1-1 2-1 3h8c0-5-9-5-14 1z" fill="#0b7be0" /></Svg> },
  { name: "IE", icon: <Svg size={24} box={24}><path d="M6 13h14c0-9-14-9-14 0 0 6 9 8 13 3" stroke="#55b8f2" strokeWidth="4" /><path d="M2 22C-1 16 12 1 21 3c2 1 1 4 0 5" stroke="#f3c41c" strokeWidth="2" /></Svg> },
  { name: "文件资源管理器", icon: <Svg size={24} box={24}><path d="M1 3h10v3h12v15H1z" fill="#fce08d" /><path d="M2 3h8v2H2z" fill="#e8b43c" /><path d="M5 13h14v9h-4v-5H9v5H5z" fill="#2ea4e0" /></Svg> },
  { name: "文档", run: true, icon: <Svg size={24} box={24}><path d="M0 0h24v24H0z" fill="#f39a1d" /><path d="M3 4h14l-1 16H4z" fill="#fffbe8" /><path d="M6 8h8M6 11h8M6 14h6M6 17h4" stroke="#a17a48" /><path d="M23 2L12 15l-1 4 3-2L24 5z" fill="#7a4a1c" /></Svg> },
  { name: "广联达", run: true, icon: <Svg size={24} box={24}><path d="M22 1c-2 3-5 2-9 2C6 3 1 7 1 13c0 5 4 10 11 10s11-5 11-9c-1-5-6-7-9-5 4 1 5 3 4 6s-9 4-9-1c0-4 4-6 8-6 4-1 6-3 5-7z" fill="#1e93ea" /></Svg> },
  { name: "360浏览器", run: true, icon: <Svg size={24} box={24}><circle cx="12" cy="12" r="11" fill="#58bf2c" /><path d="M7 13h11c0-8-12-8-12 0 0 6 8 7 11 3" stroke="#fff" strokeWidth="3" /><path d="M2 21C0 15 14 1 22 4" stroke="#d8ef9f" strokeWidth="1.500" /></Svg> },
  { name: "GGJ2013", run: true, active: true, icon: <AppLogo size={24} /> },
];

const Taskbar = () => (
  <div className={`${UI} flex h-10 shrink-0 items-stretch bg-[#020b0f] text-xs text-white`}>
    <button aria-label="开始" className="flex w-12 shrink-0 items-center justify-center bg-black">
      <Svg><path d="M0 2.300l7-1v6.300H0zM8 1.200L16 0v7.600H8zM0 8.500h7v6.300l-7-1zM8 8.500h8V16l-8-1.200z" fill="#fff" /></Svg>
    </button>
    <div className="flex w-[344px] shrink-0 items-center bg-[#333] pl-[9px] pr-3">
      <Svg size={22} box={22}><circle cx="11" cy="11" r="9" stroke="#fff" strokeWidth="2.500" /></Svg>
      <input aria-label="搜索" placeholder="在这里输入你要搜索的内容" className="ml-1 min-w-0 flex-1 bg-transparent px-px text-sm placeholder:text-[#9a9a9a]" />
      <Svg><path d="M5.500.5h5v10h-5zM3.500 7v5.500h9V7M8 13v2.500M5 15.500h6" stroke="#aaa" /></Svg>
    </div>
    <div className="flex shrink-0">
      {apps.map((a) => (
        <button key={a.name} aria-label={a.name} className={clsx("mr-px flex w-12 flex-col items-center pt-2", a.active && "bg-[#303c40]")}>
          <span className="flex h-[30px] justify-center"><span className="flex h-6 items-center">{a.icon}</span></span>
          {a.run && <span className={clsx("h-0.5 bg-[#76b9ed]", a.active ? "w-full" : "w-10")} />}
        </button>
      ))}
    </div>
    <div className="flex flex-1 items-center justify-end">
      <span className="mr-4">链接</span>
      <div className="mr-[18px] w-[50px] text-center leading-[17px]">32%<br />CPU使用</div>
      <div className="flex items-center gap-[9px]">
        <Svg size={13}><path d="M1 11l7-7 7 7" stroke="#fff" strokeWidth="1.500" /></Svg>
        <Svg><path d="M5.500 5.500h9v6h-9zM15.500 7v3M1 4h5M2 2v5l1 2h1M4.500 2v4M3 9v3h2" stroke="#fff" /><path d="M7 7h6v3H7z" fill="#fff" /></Svg>
        <Svg size={14}><path d="M1 14C2 7 7 2 15 2M4 15c1-6 5-9 11-9M8 15c1-3 3-5 7-5M11 15c1-1 2-2 4-2" stroke="#ddd" strokeWidth="1.400" /></Svg>
        <Svg size={17}><path d="M1 5.500h3l4-4v13l-4-4H1z" stroke="#fff" /><path d="M10 6c1 1 1 3 0 4M12 4c2 2 2 6 0 8M14 2c3 3 3 9 0 12" stroke="#ccc" /></Svg>
        <svg width="23" height="14" viewBox="0 0 23 14" fill="none" stroke="#fff" aria-hidden="true"><path d="M.5.5h22v13H.5z" /><path d="M3 4h17M3 7h17" strokeDasharray="1 1" strokeWidth="1.500" /><path d="M5 10.500h13" /></svg>
        <span className="w-[13px] text-center text-lg font-semibold leading-6">A</span>
        <SogouLogo size={16} className="ml-1.5" />
      </div>
      <div className="ml-[14px] w-[68px] whitespace-nowrap text-center leading-[18px]">21:12<br />2018/4/23</div>
      <button aria-label="通知中心" className="ml-3.5 flex h-full items-center bg-black pr-3">
        <Svg size={26} box={26}><path d="M1 3h16v12H9l-4 4v-4H1z" fill="#fff" /><path d="M4 6.500h10M4 9.500h10M4 12.500h6" stroke="#000" /><circle cx="17" cy="17" r="7.500" fill="#333" stroke="#777" /><path d="M15.500 14.500l2-1.500v8" stroke="#fff" strokeWidth="1.500" /></Svg>
      </button>
      <span className="h-full w-1 border-l border-[#666] bg-black" />
    </div>
  </div>
);

export default function App() {
  return (
    <div className={`${SONG} relative flex h-screen flex-col overflow-hidden bg-[#f0f0f0] text-xs text-black`}>
      <TitleBar />
      <MenuBar />
      <MainToolbar />
      <div className="mt-px flex min-h-0 flex-1 gap-1.5">
        <ModulePanel />
        <div className="flex min-w-0 flex-1 flex-col">
          <EditToolbar />
          <div className="flex min-h-0 flex-1 gap-1">
            <ComponentPanel />
            <main className="flex min-w-0 flex-1 flex-col pt-0.5">
              <div className="flex h-5 shrink-0 bg-white">
                <button className="w-[63px] border border-b-0 border-[#d9d9d9] leading-4">属性编辑</button>
                <span className="flex-1 border-b border-[#d9d9d9]" />
              </div>
              <div className="flex min-h-0 flex-1 flex-col border border-t-0 border-[#d9d9d9] bg-white px-[3px] pb-0.5 pt-1">
                <div className="min-h-0 flex-1 border border-[#a0a0a0] pl-px pt-px">
                  <PropertyGrid />
                </div>
              </div>
            </main>
          </div>
        </div>
      </div>
      <StatusBar />
      <Taskbar />
      <ImeBar />
      <RebarDialog />
      <div className="pointer-events-none absolute left-[518px] top-[195px] h-[33px] w-[188px] border-3 border-[#f00]" />
      <div className="pointer-events-none absolute left-[774px] top-[252px] h-44 w-[370px] border-3 border-[#f00]" />
    </div>
  );
}
